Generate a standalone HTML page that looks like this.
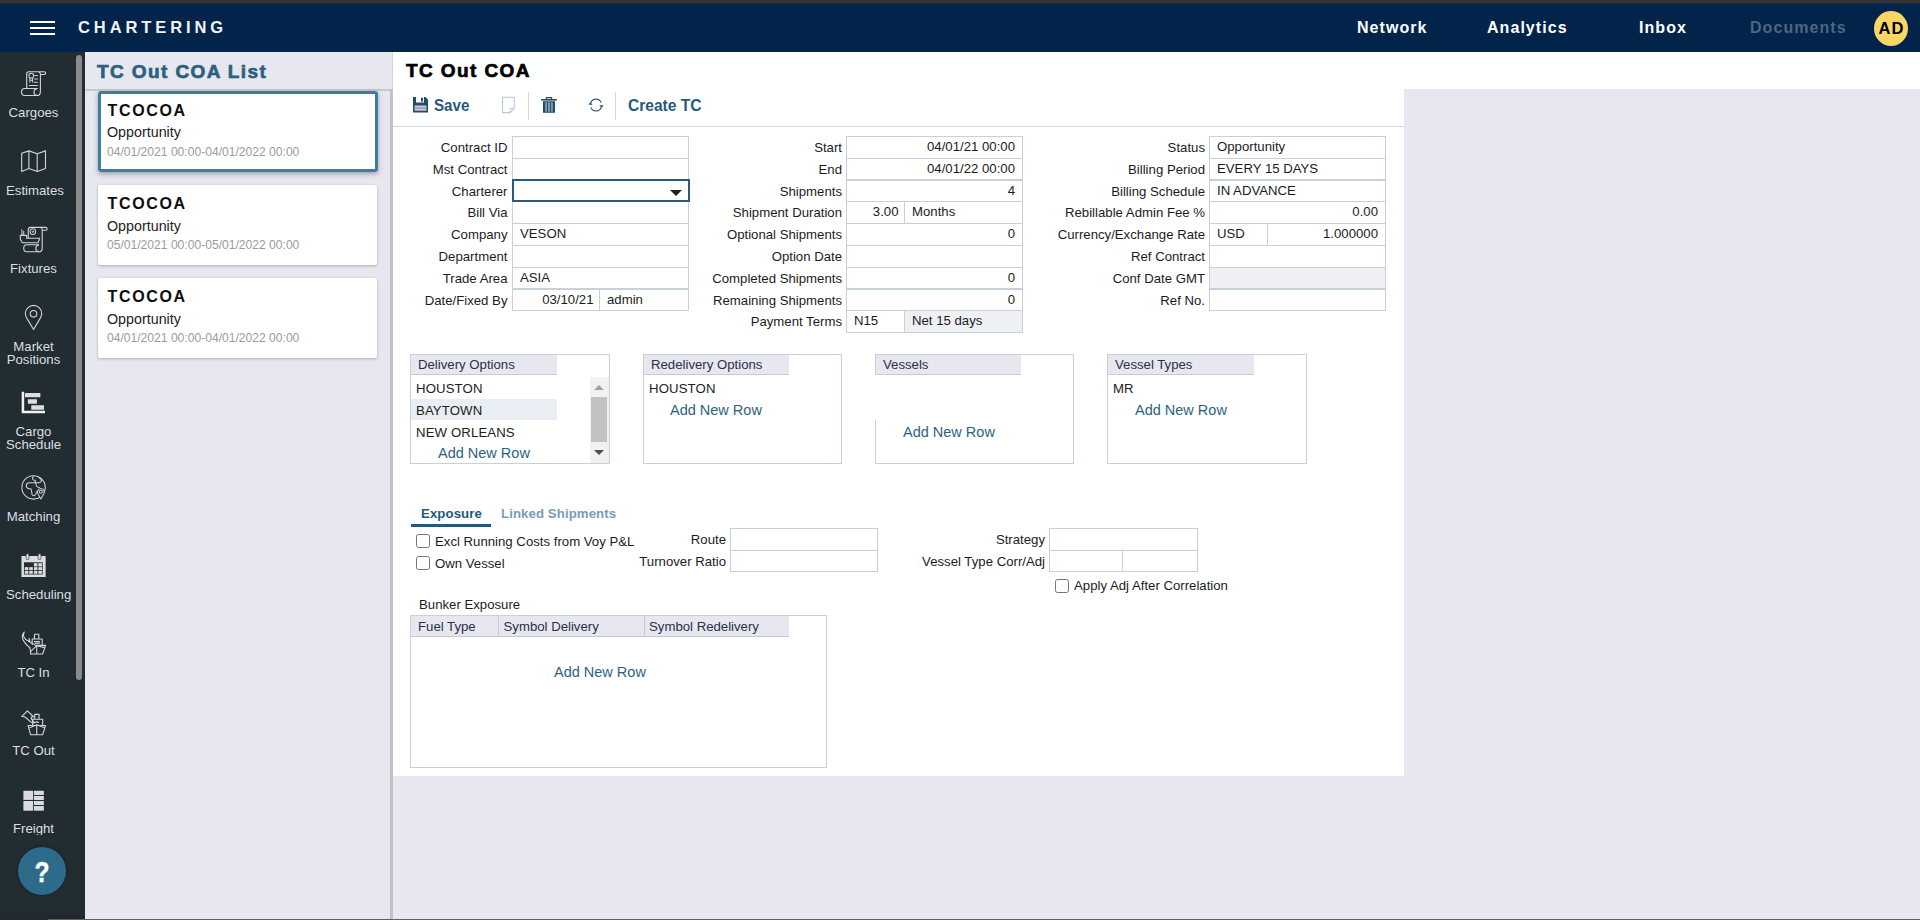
<!DOCTYPE html>
<html lang="en">
<head>
<meta charset="utf-8">
<title>TC Out COA</title>
<style>
*{box-sizing:border-box;margin:0;padding:0}
html,body{width:1920px;height:920px;overflow:hidden;background:#e7e7f0;font-family:"Liberation Sans",sans-serif;font-size:13.2px;color:#1c1c1c}
.abs{position:absolute}
#topbar{position:absolute;left:0;top:0;width:1920px;height:4px;background:#333;border-bottom:1px solid #1c2b40;z-index:2}
#header{position:absolute;left:0;top:3px;width:1920px;height:49px;background:#02244a}
#burger{position:absolute;left:30px;top:18px;width:25px;height:14px}
#burger i{position:absolute;left:0;width:25px;height:2px;background:#fff}
#brand{position:absolute;left:78px;top:14px;font-size:16.5px;font-weight:bold;letter-spacing:3.9px;color:#f1f3f7;line-height:20px;white-space:nowrap}
.nav{position:absolute;top:15px;font-size:16px;font-weight:bold;letter-spacing:1.05px;color:#fff;line-height:20px;white-space:nowrap}
.nav.dim{color:#4f6482}
#avatar{position:absolute;left:1874px;top:8px;width:34px;height:35px;border-radius:50%;background:#fad667;color:#000;font-weight:bold;font-size:16.5px;line-height:34px;text-align:center;letter-spacing:1.2px;text-indent:1.2px}
#sidebar{position:absolute;left:0;top:52px;width:85px;height:868px;background:#222d32}
#sbthumb{position:absolute;left:76px;top:3px;width:6px;height:625px;border-radius:3px;background:#8a8a8a}
.sbi{position:absolute;left:6px;width:55px;color:#dcdfe2;font-size:13.2px;line-height:13px;white-space:nowrap;text-align:center}
.ico{position:absolute}
#help{position:absolute;left:18px;top:795px;width:48px;height:48px;border-radius:50%;background:#2e6a89;box-shadow:0 0 3px rgba(0,0,0,.55)}
#help span{position:absolute;left:0;top:0;width:48px;height:48px;color:#fff;font-weight:bold;font-size:30px;line-height:50px;text-align:center;transform:scaleX(.82);-webkit-text-stroke:.5px #fff}
#list{position:absolute;left:85px;top:52px;width:305px;height:868px;background:#e7e7f0}
#listtitle{-webkit-text-stroke:.7px #2b6180;position:absolute;left:12px;top:8px;font-size:19px;font-weight:bold;letter-spacing:1.4px;color:#2b6180;line-height:24px;white-space:nowrap}
#listsep{position:absolute;left:0;top:37px;width:305px;height:2px;background:#c6c8cf}
.card{position:absolute;left:13px;width:279px;height:80px;background:#fff;border-radius:2px;box-shadow:0 1px 3px rgba(70,80,110,.4)}
.card.sel{width:280px;height:81px;box-shadow:inset 0 0 0 3px #3a7ea2,0 2px 5px rgba(60,70,100,.45);border-radius:3px}
.card b{position:absolute;left:9.5px;top:10px;font-size:16px;letter-spacing:1.65px;color:#0d0d0d;line-height:18px}
.card span{position:absolute;left:9px;top:32.5px;font-size:14.3px;color:#222;line-height:16px}
.card em{position:absolute;left:9px;top:54px;font-style:normal;font-size:12.1px;color:#9b9b9b;line-height:13px;white-space:nowrap}
.card.sel b{top:11px}.card.sel span{top:32.8px}.card.sel em{top:55px}
#split{position:absolute;left:390px;top:89px;width:3px;height:831px;background:#c0c3cb}
#split0{position:absolute;left:390px;top:52px;width:3px;height:37px;background:#e7e7f0;border-right:1px solid #d3d5dc}
#mainhead{position:absolute;left:393px;top:52px;width:1527px;height:37px;background:#fff}
#main{position:absolute;left:393px;top:89px;width:1011px;height:687px;background:#fff}
#title{-webkit-text-stroke:.7px #000;position:absolute;left:406px;top:59px;font-size:19px;font-weight:bold;letter-spacing:1.4px;color:#000;line-height:24px;white-space:nowrap}
#toolsep{position:absolute;left:393px;top:126px;width:1011px;height:1px;background:#cfd6de}
.tb{position:absolute;top:95.5px;transform-origin:0 50%;font-size:17px;font-weight:bold;color:#27597a;line-height:20px;white-space:nowrap}
.vsep{position:absolute;top:92px;width:1px;height:28px;background:#d5d8dd}
.lbl{position:absolute;text-align:right;font-size:13.2px;line-height:16px;color:#1c1c1c;white-space:nowrap}
.inp{position:absolute;border:1px solid #c9d0da;background:#fff;font-size:13.2px;line-height:19px;color:#1c1c1c;padding:0 7px;white-space:nowrap;overflow:hidden}
.inp.r{text-align:right}.inp.p5{padding-right:5.5px}
.focus{position:absolute;border:2px solid #2a5b7b;background:#fff}
.caret{position:absolute;width:0;height:0;border-left:6px solid transparent;border-right:6px solid transparent;border-top:6px solid #222}
.inp.ro{background:#eff0f3}
.grid{position:absolute;border:1px solid #c9d0da;background:#fff}
.gh{position:absolute;left:0;top:0;height:20px;background:#e7e7f0;border-bottom:1px solid #c9cbd3;font-size:13.2px;line-height:19px;padding-left:7px;color:#2a2f4a;white-space:nowrap}
.gr{position:absolute;left:0;height:22px;letter-spacing:.12px;font-size:13.2px;line-height:23px;padding-left:5px;color:#222;white-space:nowrap}
.add{position:absolute;font-size:14.5px;line-height:18px;color:#2e6380;white-space:nowrap}
.tab{position:absolute;top:506px;font-size:13.2px;font-weight:bold;line-height:16px;white-space:nowrap;letter-spacing:.1px}
.txt{position:absolute;font-size:13.2px;line-height:16px;white-space:nowrap;color:#1c1c1c}
.cb{position:absolute;width:14px;height:14px;border:1px solid #767676;border-radius:2.5px;background:#fff}
</style>
</head>
<body>
<div id="topbar"></div>
<div id="header">
  <div id="burger"><i style="top:0"></i><i style="top:6px"></i><i style="top:12px"></i></div>
  <div id="brand">CHARTERING</div>
  <div class="nav" style="left:1357px">Network</div>
  <div class="nav" style="left:1487px">Analytics</div>
  <div class="nav" style="left:1639px">Inbox</div>
  <div class="nav dim" style="left:1750px">Documents</div>
  <div id="avatar">AD</div>
</div>
<div id="sidebar">
  <div id="sbthumb"></div>
  <svg class="ico" style="left:13px;top:10px" width="42" height="42" viewBox="0 0 920 920" fill="none" stroke="#d3d5d9" stroke-width="24" stroke-linecap="round" stroke-linejoin="round"><path d="M600 275V650Q600 735 520 735H260Q185 735 185 657Q185 580 260 580H535"/><path d="M520 585Q458 600 458 657Q460 715 520 735"/><path d="M300 578V260Q300 215 345 215H680Q715 215 715 248Q715 275 688 275H605Q600 235 560 215"/><circle cx="400" cy="300" r="52" stroke-width="22"/><path d="M370 350V445M430 350V445M370 400H430" stroke-width="22"/><path d="M475 295H535M475 370H535M470 445H535M355 515H535" stroke-width="22"/></svg>
<svg class="ico" style="left:13px;top:88px" width="42" height="42" viewBox="0 0 920 920" fill="none" stroke="#d3d5d9" stroke-width="24" stroke-linejoin="round"><path d="M190 292L348 238L530 302L712 238V625L530 690L348 625L190 688ZM348 238V625M530 302V690"/></svg>
<svg class="ico" style="left:13px;top:166px" width="42" height="42" viewBox="0 0 920 920" fill="none" stroke="#d3d5d9" stroke-width="24" stroke-linecap="round" stroke-linejoin="round"><path d="M640 270V660Q640 740 560 740H300Q235 740 235 662Q235 585 300 585H560"/><path d="M560 590Q500 605 500 662Q502 720 560 740"/><path d="M335 430V250Q335 205 380 205H710Q748 205 748 240Q748 268 720 268H645Q640 228 600 205"/><circle cx="435" cy="300" r="62" stroke-width="22"/><circle cx="435" cy="300" r="18" stroke-width="18"/><path d="M195 255V375M235 290V375" stroke-width="22"/><path d="M160 380H300V445H585L548 542H205L160 465Z" fill="#222d32"/></svg>
<svg class="ico" style="left:13px;top:244px" width="42" height="42" viewBox="0 0 920 920" fill="none" stroke="#d3d5d9" stroke-width="24" stroke-linejoin="round"><path d="M450 735L305 490Q270 430 270 385A180 180 0 0 1 630 385Q630 430 595 490Z"/><circle cx="450" cy="390" r="72"/></svg>
<svg class="ico" style="left:13px;top:330px" width="42" height="42" viewBox="0 0 920 920" fill="#dcdce1" stroke="none"><path d="M190 215H245V632H700V685H190Z" fill="#f2f2f4"/><rect x="262" y="240" width="338" height="95" rx="8"/><rect x="325" y="380" width="200" height="95" rx="8"/><rect x="400" y="508" width="280" height="102" rx="8"/></svg>
<svg class="ico" style="left:13px;top:414px" width="42" height="42" viewBox="0 0 920 920" fill="none" stroke="#d3d5d9" stroke-width="23" stroke-linecap="round" stroke-linejoin="round"><circle cx="450" cy="470" r="256"/><path d="M440 232Q420 262 432 295Q445 312 488 312V368H350Q292 372 290 428Q290 488 345 497H385Q405 505 408 560L416 622Q430 655 468 648Q498 640 506 592L530 548"/><path d="M488 368Q505 390 515 438Q535 468 580 470M488 368H565Q612 362 626 322Q618 280 560 248"/><path d="M610 722L548 612Q530 575 540 545A75 75 0 0 1 682 545Q690 575 672 612Z" fill="#222d32" stroke-width="22"/><circle cx="610" cy="565" r="34" stroke-width="22"/></svg>
<svg class="ico" style="left:13px;top:493px" width="42" height="42" viewBox="0 0 920 920" stroke="none"><path d="M185 240H715V700H185ZM240 380V645H650V380Z" fill="#dddde2" fill-rule="evenodd"/><rect x="287" y="193" width="62" height="125" rx="22" fill="#dddde2" stroke="#222d32" stroke-width="14"/><rect x="550" y="193" width="62" height="125" rx="22" fill="#dddde2" stroke="#222d32" stroke-width="14"/><g fill="#dddde2"><rect x="458" y="398" width="78" height="72"/><rect x="556" y="398" width="78" height="72"/><rect x="258" y="485" width="78" height="62"/><rect x="356" y="485" width="78" height="62"/><rect x="458" y="485" width="78" height="62"/><rect x="556" y="485" width="78" height="62"/><rect x="258" y="565" width="78" height="65"/><rect x="356" y="565" width="78" height="65"/><rect x="458" y="565" width="78" height="65"/><rect x="556" y="565" width="78" height="65"/></g></svg>
<svg class="ico" style="left:13px;top:571px" width="42" height="42" viewBox="0 0 920 920" fill="none" stroke="#d3d5d9" stroke-width="24" stroke-linecap="round" stroke-linejoin="round"><path d="M245 200Q120 330 370 545M245 200Q185 320 345 400"/><path d="M352 335L372 420M345 400L500 490M370 545L390 680"/><path d="M470 340V245H565V340M420 470V350H640V470M470 405H580M480 440H585"/><path d="M500 490H715L648 680H390M520 495V680M520 495L395 615M520 495L690 540"/></svg>
<svg class="ico" style="left:13px;top:649px" width="42" height="42" viewBox="0 0 920 920" fill="none" stroke="#d3d5d9" stroke-width="24" stroke-linecap="round" stroke-linejoin="round"><path d="M190 340L315 218L450 345L400 350L405 400L470 480L400 470L255 345Z"/><path d="M475 385V292H570V385M430 520V400H650V520M480 470Q520 445 560 470"/><path d="M330 535H715L648 740H385ZM520 535V740M520 520L370 585M520 520L690 585"/></svg>
<svg class="ico" style="left:13px;top:727px" width="42" height="42" viewBox="0 0 920 920" fill="#dadadf" stroke="none"><rect x="228" y="258" width="212" height="200"/><rect x="228" y="482" width="212" height="212"/><rect x="458" y="258" width="218" height="92"/><rect x="458" y="372" width="218" height="88"/><rect x="458" y="482" width="218" height="88"/><rect x="458" y="592" width="218" height="102"/></svg>
<div class="sbi" style="top:54px">Cargoes</div>
<div class="sbi" style="top:132px">Estimates</div>
<div class="sbi" style="top:210px">Fixtures</div>
<div class="sbi" style="top:288px">Market<br>Positions</div>
<div class="sbi" style="top:373px">Cargo<br>Schedule</div>
<div class="sbi" style="top:458px">Matching</div>
<div class="sbi" style="top:536px">Scheduling</div>
<div class="sbi" style="top:614px">TC In</div>
<div class="sbi" style="top:692px">TC Out</div>
<div class="sbi" style="top:770px">Freight</div>
<div class="abs" id="clipbar" style="left:0;top:783px;width:74px;height:11px;background:#222d32"></div>

  <div id="help"><span>?</span></div>
  <div class="abs" style="left:0;top:861px;width:85px;height:7px;background:#1f292e"></div>
</div>
<div id="list">
  <div id="listtitle">TC Out COA List</div>
  <div id="listsep"></div>
  <div class="card sel" style="top:39px"><b>TCOCOA</b><span>Opportunity</span><em>04/01/2021 00:00-04/01/2022 00:00</em></div>
  <div class="card" style="top:133px"><b>TCOCOA</b><span>Opportunity</span><em>05/01/2021 00:00-05/01/2022 00:00</em></div>
  <div class="card" style="top:226px"><b>TCOCOA</b><span>Opportunity</span><em>04/01/2021 00:00-04/01/2022 00:00</em></div>
</div>
<div id="split0"></div><div id="split"></div>
<div id="mainhead"></div>
<div id="main"></div>
<div id="title">TC Out COA</div>
<div id="toolsep"></div>
<svg class="ico" style="left:412px;top:96px" width="17" height="17" viewBox="0 0 17 17"><path d="M1 1H13.5L16 3.5V16.5H1Z" fill="#1f4e6b"/><rect x="4" y="1" width="8" height="5.5" fill="#fff"/><rect x="9" y="1.8" width="2" height="3.8" fill="#1f4e6b"/><rect x="2.6" y="9.5" width="11.8" height="5.2" fill="#c9ccd6"/><rect x="2.6" y="11.3" width="11.8" height="1.6" fill="#9aa0b4"/></svg>
<div class="tb" style="left:434px;transform:scaleX(.89)">Save</div>
<svg class="ico" style="left:501px;top:96px" width="15" height="18" viewBox="0 0 15 18" fill="none" stroke="#b9c6dc" stroke-width="1.1"><path d="M1.5 1.2H13.2V12.6L9.2 16.6H1.5Z"/><path d="M13.2 12.6H9.2V16.6" stroke="#c9cfdc"/></svg>
<div class="vsep" style="left:528px"></div>
<svg class="ico" style="left:540px;top:96px" width="18" height="18" viewBox="0 0 18 18" fill="#1f4e6b"><path d="M1.2 3H16.8V4.6H1.2Z"/><path d="M5.8 1H12.2V3.4H10.9V2.2H7.1V3.4H5.8Z"/><path d="M3 5.2H15V16.8H3ZM5.6 6.4V15.4H6.8V6.4ZM8.4 6.4V15.4H9.6V6.4ZM11.2 6.4V15.4H12.4V6.4Z" fill-rule="evenodd"/><rect x="5.6" y="6.4" width="1.2" height="9" fill="#6f8fa5"/><rect x="8.4" y="6.4" width="1.2" height="9" fill="#6f8fa5"/><rect x="11.2" y="6.4" width="1.2" height="9" fill="#6f8fa5"/></svg>
<svg class="ico" style="left:587px;top:97px" width="18" height="16" viewBox="0 0 18 16" fill="none" stroke="#2b5a78" stroke-width="1.15"><path d="M3.6 6.2A5.6 5.6 0 0 1 14.2 5.6"/><path d="M14.4 9.8A5.6 5.6 0 0 1 3.8 10.4"/><path d="M1.2 7.4L3.6 5.2L5.6 8Z" fill="#2b5a78" stroke="none"/><path d="M16.8 8.6L14.4 10.8L12.4 8Z" fill="#2b5a78" stroke="none"/></svg>
<div class="vsep" style="left:615px"></div>
<div class="tb" style="left:628px;transform:scaleX(.915)">Create TC</div>

<div class="lbl" style="right:1412.5px;top:140.0px">Contract ID</div>
<div class="inp " style="left:512px;top:136px;width:177px;height:23px"></div>
<div class="lbl" style="right:1412.5px;top:162.0px">Mst Contract</div>
<div class="inp " style="left:512px;top:158px;width:177px;height:22px"></div>
<div class="lbl" style="right:1412.5px;top:184.0px">Charterer</div>
<div class="inp " style="left:512px;top:180px;width:177px;height:22px"></div>
<div class="lbl" style="right:1412.5px;top:205.0px">Bill Via</div>
<div class="inp " style="left:512px;top:201px;width:177px;height:23px"></div>
<div class="lbl" style="right:1412.5px;top:227.0px">Company</div>
<div class="inp " style="left:512px;top:223px;width:177px;height:23px">VESON</div>
<div class="lbl" style="right:1412.5px;top:249.0px">Department</div>
<div class="inp " style="left:512px;top:245px;width:177px;height:23px"></div>
<div class="lbl" style="right:1412.5px;top:271.0px">Trade Area</div>
<div class="inp " style="left:512px;top:267px;width:177px;height:22px">ASIA</div>
<div class="lbl" style="right:1412.5px;top:293.0px">Date/Fixed By</div>
<div class="inp r p5" style="left:512px;top:289px;width:88px;height:22px">03/10/21</div>
<div class="inp " style="left:599px;top:289px;width:90px;height:22px">admin</div>
<div class="focus" style="left:512px;top:179px;width:178px;height:23px"></div><div class="caret" style="left:670px;top:190px"></div>
<div class="lbl" style="right:1078px;top:140.0px">Start</div>
<div class="inp r" style="left:846px;top:136px;width:177px;height:23px">04/01/21 00:00</div>
<div class="lbl" style="right:1078px;top:162.0px">End</div>
<div class="inp r" style="left:846px;top:158px;width:177px;height:22px">04/01/22 00:00</div>
<div class="lbl" style="right:1078px;top:184.0px">Shipments</div>
<div class="inp r" style="left:846px;top:180px;width:177px;height:22px">4</div>
<div class="lbl" style="right:1078px;top:205.0px">Shipment Duration</div>
<div class="inp r p5" style="left:846px;top:201px;width:59px;height:23px">3.00</div>
<div class="inp " style="left:904px;top:201px;width:119px;height:23px">Months</div>
<div class="lbl" style="right:1078px;top:227.0px">Optional Shipments</div>
<div class="inp r" style="left:846px;top:223px;width:177px;height:23px">0</div>
<div class="lbl" style="right:1078px;top:249.0px">Option Date</div>
<div class="inp r" style="left:846px;top:245px;width:177px;height:23px"></div>
<div class="lbl" style="right:1078px;top:271.0px">Completed Shipments</div>
<div class="inp r" style="left:846px;top:267px;width:177px;height:22px">0</div>
<div class="lbl" style="right:1078px;top:293.0px">Remaining Shipments</div>
<div class="inp r" style="left:846px;top:289px;width:177px;height:22px">0</div>
<div class="lbl" style="right:1078px;top:314.0px">Payment Terms</div>
<div class="inp " style="left:846px;top:310px;width:59px;height:23px">N15</div>
<div class="inp ro" style="left:904px;top:310px;width:119px;height:23px">Net 15 days</div>
<div class="lbl" style="right:715px;top:140.0px">Status</div>
<div class="inp " style="left:1209px;top:136px;width:177px;height:23px">Opportunity</div>
<div class="lbl" style="right:715px;top:162.0px">Billing Period</div>
<div class="inp " style="left:1209px;top:158px;width:177px;height:22px">EVERY 15 DAYS</div>
<div class="lbl" style="right:715px;top:184.0px">Billing Schedule</div>
<div class="inp " style="left:1209px;top:180px;width:177px;height:22px">IN ADVANCE</div>
<div class="lbl" style="right:715px;top:205.0px">Rebillable Admin Fee %</div>
<div class="inp r" style="left:1209px;top:201px;width:177px;height:23px">0.00</div>
<div class="lbl" style="right:715px;top:227.0px">Currency/Exchange Rate</div>
<div class="inp " style="left:1209px;top:223px;width:59px;height:23px">USD</div>
<div class="inp r" style="left:1267px;top:223px;width:119px;height:23px">1.000000</div>
<div class="lbl" style="right:715px;top:249.0px">Ref Contract</div>
<div class="inp " style="left:1209px;top:245px;width:177px;height:23px"></div>
<div class="lbl" style="right:715px;top:271.0px">Conf Date GMT</div>
<div class="inp ro" style="left:1209px;top:267px;width:177px;height:22px"></div>
<div class="lbl" style="right:715px;top:293.0px">Ref No.</div>
<div class="inp " style="left:1209px;top:289px;width:177px;height:22px"></div>
<div class="grid" style="left:410px;top:354px;width:200px;height:110px">
  <div class="gh" style="width:146px">Delivery Options</div>
  <div class="gr" style="top:22px">HOUSTON</div>
  <div class="gr" style="top:44px;width:146px;height:21px;background:#e8eef3">BAYTOWN</div>
  <div class="gr" style="top:66px">NEW ORLEANS</div>
  <div class="add" style="left:27px;top:89px">Add New Row</div>
  <div class="abs" style="left:179px;top:22px;width:19px;height:86px;background:#f1f1f1"></div>
  <div class="abs" style="left:180px;top:42px;width:16px;height:45px;background:#c1c1c1"></div>
  <div class="abs" style="left:183px;top:30px;border-left:5px solid transparent;border-right:5px solid transparent;border-bottom:5px solid #a3a3a3"></div>
  <div class="abs" style="left:183px;top:95px;border-left:5px solid transparent;border-right:5px solid transparent;border-top:5px solid #505050"></div>
</div>
<div class="grid" style="left:643px;top:354px;width:199px;height:110px">
  <div class="gh" style="width:145px">Redelivery Options</div>
  <div class="gr" style="top:22px">HOUSTON</div>
  <div class="add" style="left:26px;top:46px">Add New Row</div>
</div>
<div class="grid" style="left:875px;top:354px;width:199px;height:110px">
  <div class="gh" style="width:145px">Vessels</div>
  <div class="add" style="left:27px;top:68px">Add New Row</div>
  <div class="abs" style="left:-1px;top:20px;width:1px;height:45px;background:#fff"></div>
</div>
<div class="grid" style="left:1107px;top:354px;width:200px;height:110px">
  <div class="gh" style="width:146px">Vessel Types</div>
  <div class="gr" style="top:22px">MR</div>
  <div class="add" style="left:27px;top:46px">Add New Row</div>
</div>

<div class="tab" style="left:421px;color:#24597a">Exposure</div>
<div class="tab" style="left:501px;color:#7a9db5">Linked Shipments</div>
<div class="abs" style="left:411px;top:524px;width:80px;height:3px;background:#24597a"></div>
<div class="cb" style="left:416px;top:534px"></div><div class="txt" style="left:435px;top:533.8px">Excl Running Costs from Voy P&amp;L</div>
<div class="cb" style="left:416px;top:556px"></div><div class="txt" style="left:435px;top:555.8px">Own Vessel</div>
<div class="lbl" style="right:1194px;top:532px">Route</div>
<div class="lbl" style="right:1194px;top:554px">Turnover Ratio</div>
<div class="inp" style="left:730px;top:528px;width:148px;height:23px"></div>
<div class="inp" style="left:730px;top:550px;width:148px;height:22px"></div>
<div class="lbl" style="right:875px;top:532px">Strategy</div>
<div class="lbl" style="right:875px;top:554px">Vessel Type Corr/Adj</div>
<div class="inp" style="left:1049px;top:528px;width:149px;height:23px"></div>
<div class="inp" style="left:1049px;top:550px;width:74px;height:22px"></div>
<div class="inp" style="left:1122px;top:550px;width:76px;height:22px"></div>
<div class="cb" style="left:1055px;top:579px"></div><div class="txt" style="left:1074px;top:578px">Apply Adj After Correlation</div>
<div class="txt" style="left:419px;top:597px">Bunker Exposure</div>
<div class="grid" style="left:410px;top:615px;width:417px;height:153px">
  <div class="gh" style="width:88px;height:21px;line-height:21px">Fuel Type</div>
  <div class="gh" style="left:87px;width:147px;height:21px;line-height:21px;border-left:1px solid #c9cbd3;padding-left:4.5px">Symbol Delivery</div>
  <div class="gh" style="left:233px;width:145px;height:21px;line-height:21px;border-left:1px solid #c9cbd3;padding-left:4px">Symbol Redelivery</div>
  <div class="add" style="left:143px;top:47px">Add New Row</div>
</div>

<div class="abs" style="left:48px;top:919px;width:1872px;height:1px;background:#606060"></div>
</body>
</html>
